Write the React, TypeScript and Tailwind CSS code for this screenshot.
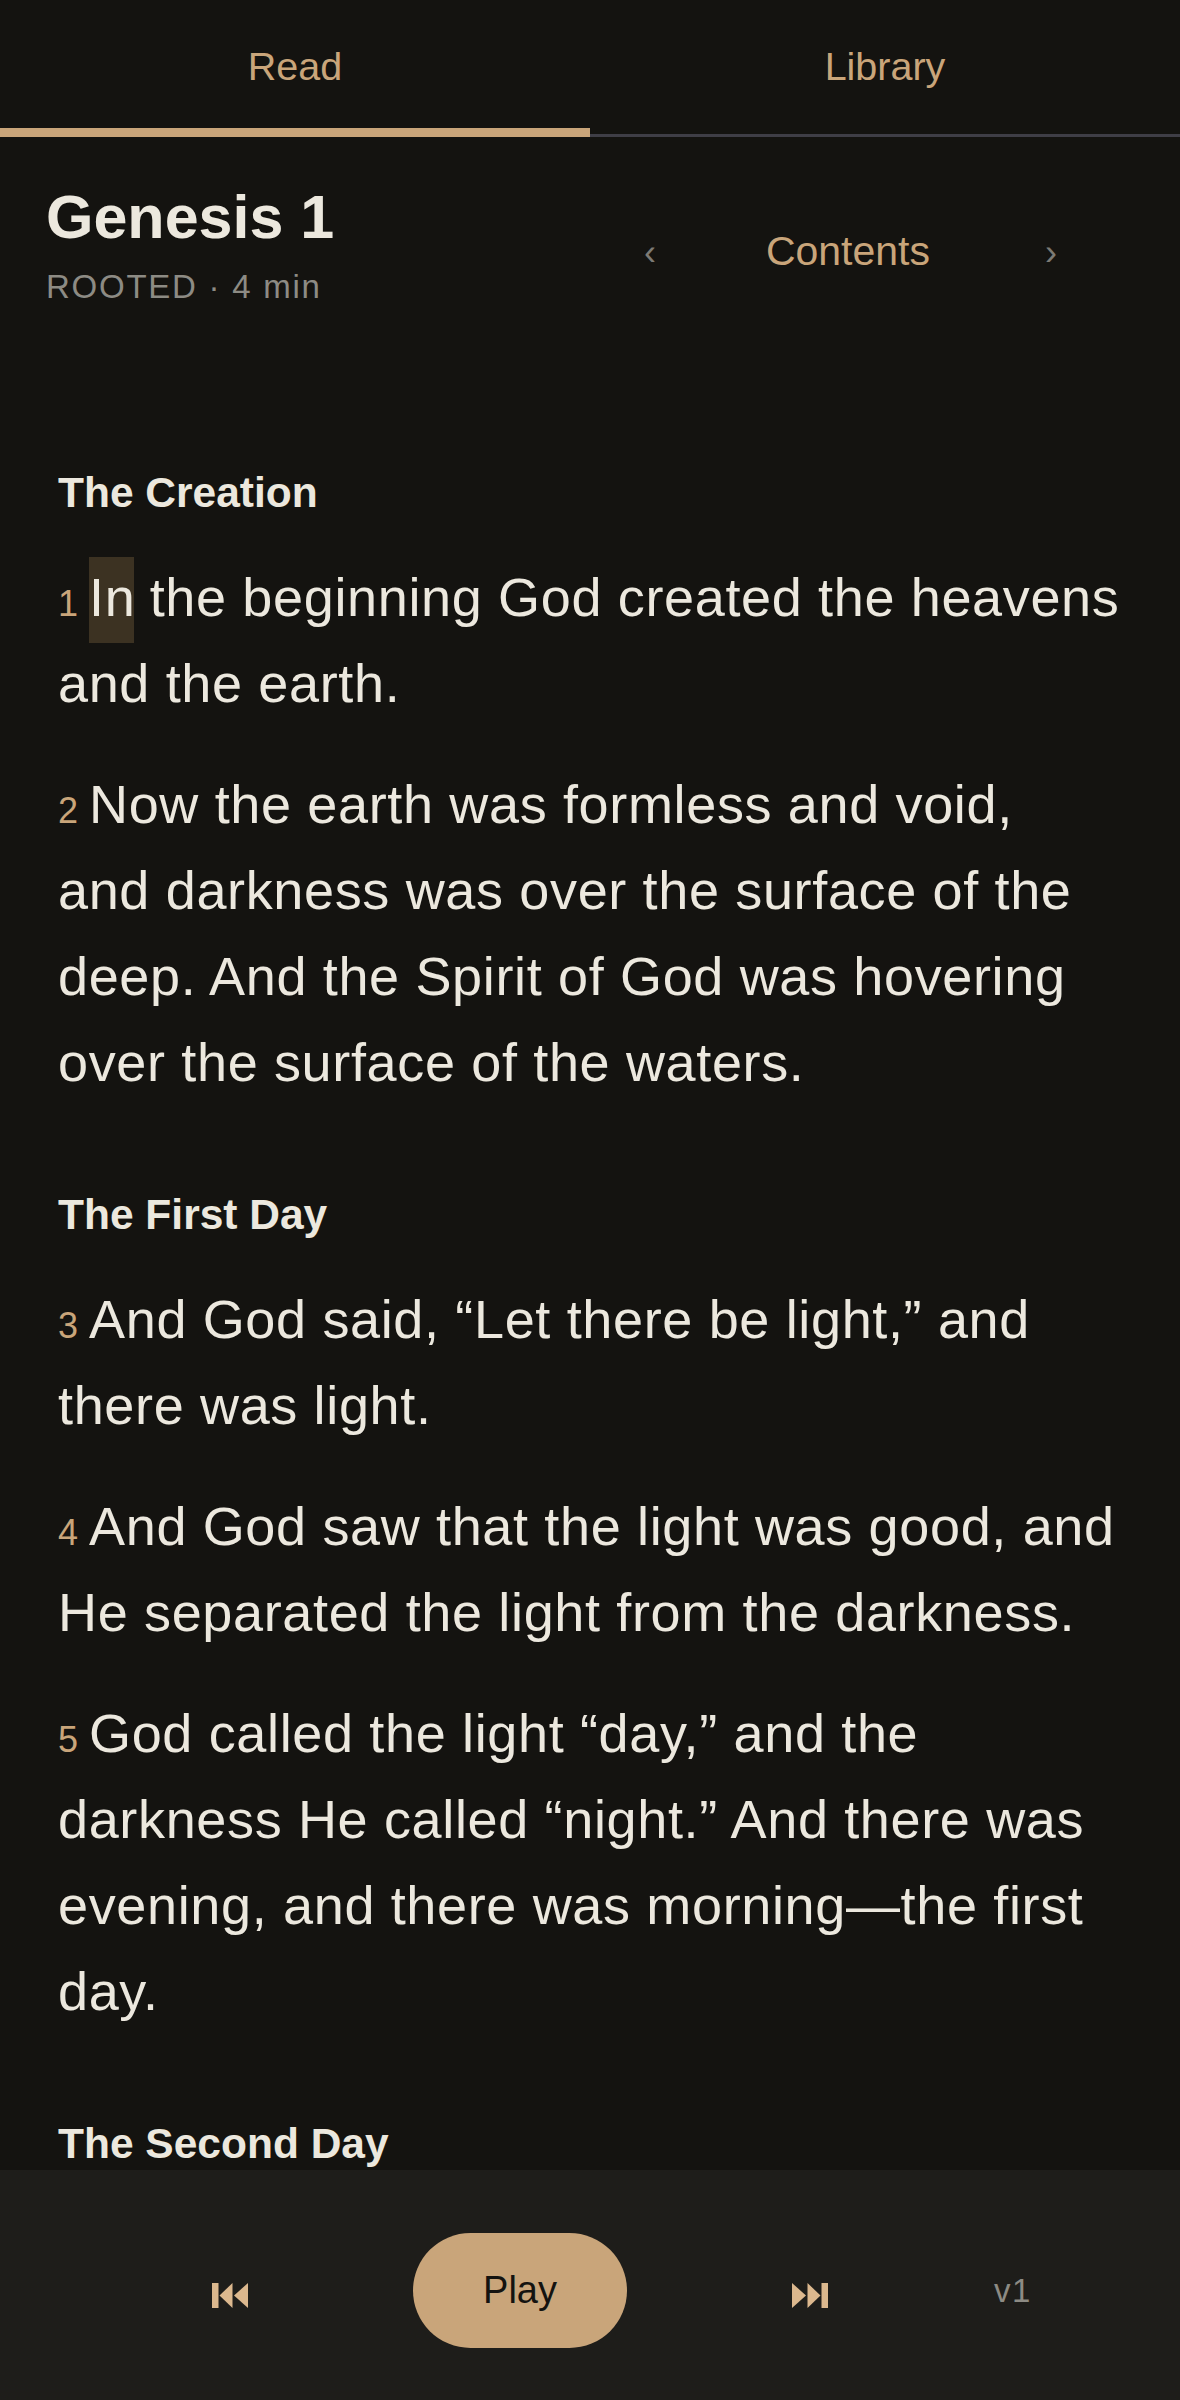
const Verse = ({ n, children }: { n: number; children: React.ReactNode }) => (
  <p className="mb-[35px] text-[54px] leading-[86px] tracking-[0.65px] text-[#ece8de]">
    <span className="mr-[11px] text-[36px] leading-none tracking-normal text-[#c9a57a]">{n}</span>
    {children}
  </p>
);

const Heading = ({ children, first }: { children: React.ReactNode; first?: boolean }) => (
  <h2 className={`${first ? "" : "mt-[80px]"} mb-[32px] text-[42.5px] leading-[59px] font-bold text-[#ece8de]`}>
    {children}
  </h2>
);

export default function App() {
  return (
    <div className="flex h-[2400px] w-[1180px] flex-col overflow-hidden bg-[#141310] font-['Liberation_Sans',sans-serif]">
      <div className="flex h-[137px] shrink-0">
        <div className="flex flex-1 items-center justify-center border-b-[9px] border-[#c9a57a] pt-[6px] text-[39.5px] text-[#c9a57a]">Read</div>
        <div className="flex flex-1 items-center justify-center border-b-[3px] border-[#3f3e46] text-[39.5px] text-[#c9a57a]">Library</div>
      </div>
      <div className="flex h-[190px] shrink-0 items-start pl-[46px]">
        <div className="pt-[40px]">
          <div className="text-[61px] leading-[80px] font-bold text-[#ece8de]">Genesis 1</div>
          <div className="mt-[7px] text-[33px] leading-[46px] tracking-[1.75px] text-[#8d8b84]">ROOTED · 4 min</div>
        </div>
        <div className="ml-auto flex items-baseline pt-[91px]">
          <span className="text-[36px] leading-[46px] text-[#7c7a74]">‹</span>
          <span className="mr-[115px] ml-[110px] text-[41px] leading-[46px] text-[#c9a57a]">Contents</span>
          <span className="mr-[123px] text-[36px] leading-[46px] text-[#7c7a74]">›</span>
        </div>
      </div>
      <div className="h-0 min-h-0 flex-1 overflow-hidden px-[58px] pt-[136px]">
        <Heading first>The Creation</Heading>
        <Verse n={1}>
          <span className="-mb-[3px] inline-block h-[86px] w-[45px] bg-[#3c3222] leading-[80px]">In</span> the beginning God created the heavens and the earth.
        </Verse>
        <Verse n={2}>Now the earth was formless and void,<br />and darkness was over the surface of the deep. And the Spirit of God was hovering over the surface of the waters.</Verse>
        <Heading>The First Day</Heading>
        <Verse n={3}>And God said, “Let there be light,” and there was light.</Verse>
        <Verse n={4}>And God saw that the light was good, and He separated the light from the darkness.</Verse>
        <Verse n={5}>God called the light “day,” and the darkness He called “night.” And there was evening, and there was morning—the first day.</Verse>
        <Heading>The Second Day</Heading>
      </div>
      <div className="flex h-[230px] shrink-0 items-center gap-[165px] bg-[#1e1d1a] pt-[11px] pl-[212px]">
        <svg className="mt-[9px] h-[25px] w-[36px]" viewBox="0 0 36 25" fill="#dcb88e">
          <rect x="0" y="0" width="6.5" height="25" />
          <path d="M20.5 0V25L7.5 12.5Z" />
          <path d="M36 0V25L22 12.5Z" />
        </svg>
        <div className="flex h-[115px] w-[214px] items-center justify-center rounded-full bg-[#c9a57a] text-[38px] text-[#141310]">Play</div>
        <svg className="mt-[9px] h-[25px] w-[36px]" viewBox="0 0 36 25" fill="#dcb88e">
          <path d="M0 0V25L14 12.5Z" />
          <path d="M15.5 0V25L28.5 12.5Z" />
          <rect x="29.5" y="0" width="6.5" height="25" />
        </svg>
        <div className="ml-[1px] text-[33px] tracking-[1.5px] text-[#8d8b84]">v1</div>
      </div>
    </div>
  );
}
